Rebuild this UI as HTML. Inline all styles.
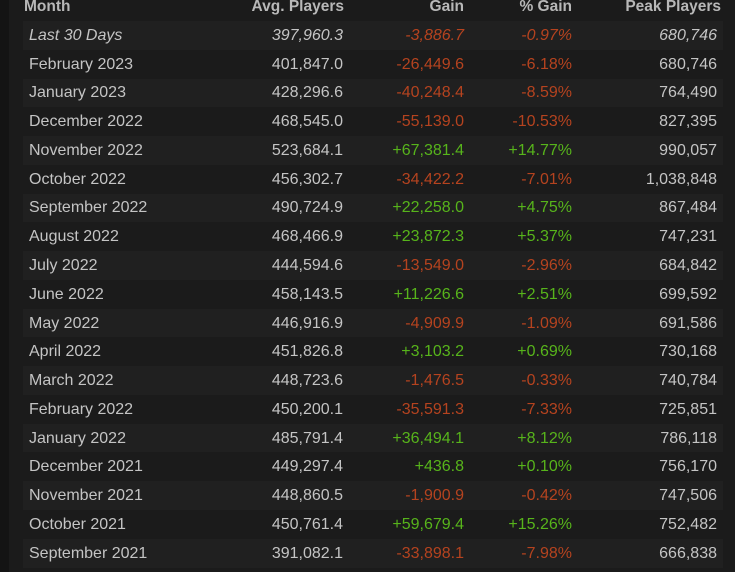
<!DOCTYPE html>
<html><head><meta charset="utf-8"><style>
html,body{margin:0;padding:0;}
body{width:735px;height:572px;overflow:hidden;background:#1b1b1b;font-family:"Liberation Sans",Arial,sans-serif;position:relative;}
.strip{position:absolute;left:0;top:0;width:9px;height:572px;background:#141414;}
table{position:absolute;left:23px;top:-8px;width:700px;border-collapse:collapse;font-size:16px;color:#c4c4c4;}
th{font-weight:bold;color:#b8b8b8;height:29px;padding:0;text-align:right;vertical-align:middle;font-size:15.5px;}
td{height:28.78px;padding:0;text-align:right;white-space:nowrap;padding-top:1px;box-sizing:border-box;}
th:first-child{text-align:left;padding-left:1px;}
td:first-child{text-align:left;padding-left:6px;}
tbody tr:nth-child(odd){background:#202020;}
.r{color:#b5431f}.g{color:#57b41b}
tr.it td{font-style:italic}
td:nth-child(2){padding-right:1px}
td:nth-child(5){padding-right:6px}
th:nth-child(5){padding-right:2px}
</style></head><body>
<div class="strip"></div>
<table>
<colgroup><col style="width:126px"><col style="width:195px"><col style="width:120px"><col style="width:108px"><col style="width:151px"></colgroup>
<thead><tr><th>Month</th><th>Avg. Players</th><th>Gain</th><th>% Gain</th><th>Peak Players</th></tr></thead>
<tbody>
<tr class="it"><td>Last 30 Days</td><td>397,960.3</td><td class="r">-3,886.7</td><td class="r">-0.97%</td><td>680,746</td></tr>
<tr><td>February 2023</td><td>401,847.0</td><td class="r">-26,449.6</td><td class="r">-6.18%</td><td>680,746</td></tr>
<tr><td>January 2023</td><td>428,296.6</td><td class="r">-40,248.4</td><td class="r">-8.59%</td><td>764,490</td></tr>
<tr><td>December 2022</td><td>468,545.0</td><td class="r">-55,139.0</td><td class="r">-10.53%</td><td>827,395</td></tr>
<tr><td>November 2022</td><td>523,684.1</td><td class="g">+67,381.4</td><td class="g">+14.77%</td><td>990,057</td></tr>
<tr><td>October 2022</td><td>456,302.7</td><td class="r">-34,422.2</td><td class="r">-7.01%</td><td>1,038,848</td></tr>
<tr><td>September 2022</td><td>490,724.9</td><td class="g">+22,258.0</td><td class="g">+4.75%</td><td>867,484</td></tr>
<tr><td>August 2022</td><td>468,466.9</td><td class="g">+23,872.3</td><td class="g">+5.37%</td><td>747,231</td></tr>
<tr><td>July 2022</td><td>444,594.6</td><td class="r">-13,549.0</td><td class="r">-2.96%</td><td>684,842</td></tr>
<tr><td>June 2022</td><td>458,143.5</td><td class="g">+11,226.6</td><td class="g">+2.51%</td><td>699,592</td></tr>
<tr><td>May 2022</td><td>446,916.9</td><td class="r">-4,909.9</td><td class="r">-1.09%</td><td>691,586</td></tr>
<tr><td>April 2022</td><td>451,826.8</td><td class="g">+3,103.2</td><td class="g">+0.69%</td><td>730,168</td></tr>
<tr><td>March 2022</td><td>448,723.6</td><td class="r">-1,476.5</td><td class="r">-0.33%</td><td>740,784</td></tr>
<tr><td>February 2022</td><td>450,200.1</td><td class="r">-35,591.3</td><td class="r">-7.33%</td><td>725,851</td></tr>
<tr><td>January 2022</td><td>485,791.4</td><td class="g">+36,494.1</td><td class="g">+8.12%</td><td>786,118</td></tr>
<tr><td>December 2021</td><td>449,297.4</td><td class="g">+436.8</td><td class="g">+0.10%</td><td>756,170</td></tr>
<tr><td>November 2021</td><td>448,860.5</td><td class="r">-1,900.9</td><td class="r">-0.42%</td><td>747,506</td></tr>
<tr><td>October 2021</td><td>450,761.4</td><td class="g">+59,679.4</td><td class="g">+15.26%</td><td>752,482</td></tr>
<tr><td>September 2021</td><td>391,082.1</td><td class="r">-33,898.1</td><td class="r">-7.98%</td><td>666,838</td></tr>
</tbody></table>
</body></html>
